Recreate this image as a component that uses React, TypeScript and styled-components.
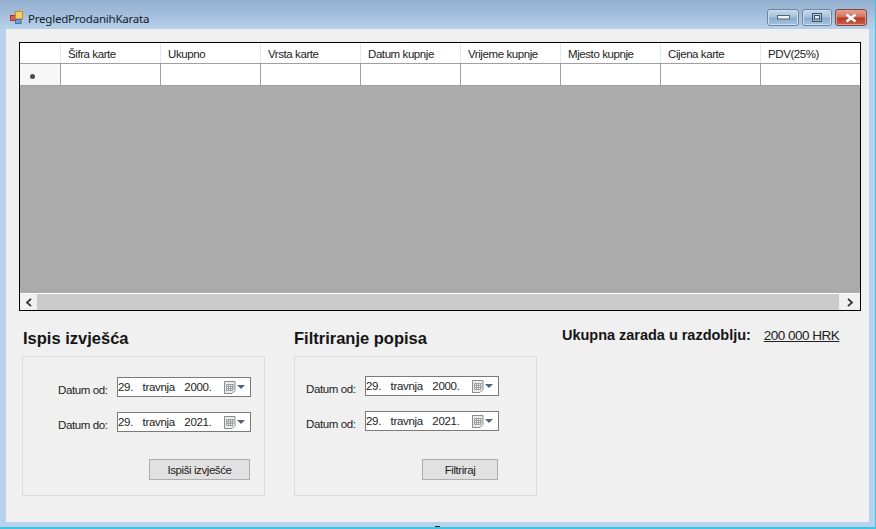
import React from "react";
import styled, { createGlobalStyle } from "styled-components";

const Global = createGlobalStyle`
  html, body { margin: 0; padding: 0; width: 876px; height: 529px; overflow: hidden; background: #b9d1ea; }
  * { box-sizing: border-box; }
`;

const Frame = styled.div`
  position: relative;
  width: 876px;
  height: 529px;
  display: flex;
  flex-direction: column;
  overflow: hidden;
  padding: 0 6px 0 6px;
  border-bottom: 2px solid #38c6e6;
  border-right: 1px solid #38c6e6;
  background: linear-gradient(180deg, #93afce 0, #a3bedb 14px, #b9d2ec 30px, #b9d2ec 100%);
  font-family: "Liberation Sans", Arial, sans-serif;
  color: #111;
  &::after {
    content: "";
    position: absolute;
    left: 435px;
    bottom: -1px;
    width: 5px;
    height: 2px;
    background: #222;
  }
`;

const TitleBar = styled.div`
  height: 29px;
  flex: none;
  display: flex;
  align-items: center;
  padding: 0 2px 0 4px;
`;

const AppIcon = styled.svg`
  width: 13px;
  height: 13px;
  flex: none;
  margin-top: 5px;
`;

const Title = styled.div`
  margin: 7px 0 0 5px;
  font: 11.5px "Noto Sans", sans-serif;
  letter-spacing: -0.22px;
  color: #15202c;
  flex: 1;
`;

const WinButtons = styled.div`
  display: flex;
  gap: 3px;
  align-self: flex-start;
  margin-top: 9px;
`;

const WinButton = styled.div<{ $w: number; $close?: boolean }>`
  width: ${(p) => p.$w}px;
  height: 17px;
  border: 1px solid ${(p) => (p.$close ? "#7d4a45" : "#6d84a0")};
  border-radius: 3px;
  box-shadow: inset 0 0 0 1px ${(p) => (p.$close ? "#e09a8e" : "#cfdeee")};
  background: ${(p) =>
    p.$close
      ? "linear-gradient(180deg,#e6a596 0,#d5705e 45%,#b83a26 55%,#c8604a 100%)"
      : "linear-gradient(180deg,#c6d8ea 0,#a8c2dc 45%,#8cabcb 55%,#a7c5e2 100%)"};
  display: flex;
  align-items: center;
  justify-content: center;
`;

const Client = styled.div`
  flex: 1;
  width: 863px;
  margin-bottom: 5px;
  background: #f0f0f0;
  padding: 13px 8px 0 13px;
  display: flex;
  flex-direction: column;
`;

const GridBox = styled.div`
  width: 842px;
  height: 269px;
  flex: none;
  border: 1px solid #000;
  background: #ababab;
  display: flex;
  flex-direction: column;
  overflow: hidden;
`;

const Row = styled.div<{ $h: number }>`
  display: flex;
  flex: none;
  height: ${(p) => p.$h}px;
  width: 840px;
  overflow: hidden;
  background: #fff;
  border-bottom: 1px solid #a0a0a0;
`;

const HeaderCell = styled.div<{ $corner?: boolean }>`
  flex: none;
  width: ${(p) => (p.$corner ? 41 : 100)}px;
  border-right: 1px solid #dfe8f4;
  padding: 2px 0 0 7px;
  font-size: 11.5px;
  line-height: 18px;
  letter-spacing: -0.42px;
  color: #222;
`;

const Cell = styled.div`
  flex: none;
  width: 100px;
  border-right: 1px solid #a0a0a0;
  background: #fff;
`;

const RowHead = styled.div`
  flex: none;
  width: 41px;
  background: #f7f7f7;
  border-right: 1px solid #a0a0a0;
  display: flex;
  align-items: center;
  justify-content: flex-start;
  padding-left: 10px;
`;

const Star = styled.span`
  width: 5px;
  height: 5px;
  border-radius: 50%;
  background: #4a4a4a;
  margin-top: 3px;
`;

const Gray = styled.div`
  flex: 1;
`;

const ScrollBar = styled.div`
  flex: none;
  height: 17px;
  border-top: 1px solid #fff;
  background: #f0f0f0;
  display: flex;
  align-items: stretch;
`;

const ScrollBtn = styled.div<{ $w: number }>`
  width: ${(p) => p.$w}px;
  flex: none;
  display: flex;
  align-items: center;
  justify-content: center;
`;

const Thumb = styled.div`
  flex: 1;
  background: #cbcbcb;
`;

const Bottom = styled.div`
  display: flex;
  align-items: flex-start;
  padding: 17px 0 0 3px;
`;

const Section = styled.section`
  width: 243px;
  flex: none;
  margin-right: 29px;
`;

const Heading = styled.h2<{ $pl: number }>`
  margin: 0 0 8px;
  padding-left: ${(p) => p.$pl}px;
  font-size: 16.5px;
  line-height: 20px;
  font-weight: 700;
  color: #151515;
`;

const Panel = styled.div<{ $pl: number; $pt: number; $btnGap: number; $btnRight: number; $btnW: number }>`
  height: 140px;
  border: 1px solid #dcdcdc;
  padding: ${(p) => p.$pt}px 0 0 ${(p) => p.$pl}px;
  display: flex;
  flex-direction: column;
  gap: 15px;
  button {
    width: ${(p) => p.$btnW}px;
    margin-top: ${(p) => p.$btnGap}px;
    align-self: flex-end;
    margin-right: ${(p) => p.$btnRight}px;
  }
`;

const Field = styled.div`
  display: flex;
  align-items: center;
`;

const Label = styled.label`
  width: 59px;
  flex: none;
  font-size: 11.5px;
  letter-spacing: -0.38px;
  color: #222;
  padding-top: 6px;
`;

const DatePicker = styled.div`
  width: 134px;
  height: 20px;
  flex: none;
  border: 1px solid #7a7a7a;
  background: #fff;
  display: flex;
  align-items: center;
  font-size: 11.5px;
  letter-spacing: -0.3px;
  word-spacing: 6.5px;
  color: #222;
`;

const DateText = styled.span`
  flex: 1;
  white-space: pre;
  padding-bottom: 1px;
`;

const CalIcon = styled.svg`
  width: 21px;
  height: 13px;
  flex: none;
  margin-right: 5px;
`;

const ActionButton = styled.button`
  height: 21px;
  border: 1px solid #adadad;
  background: #e1e1e1;
  font-family: "Liberation Sans", Arial, sans-serif;
  font-size: 11.5px;
  letter-spacing: -0.42px;
  color: #222;
  padding: 0;
`;

const Total = styled.div`
  display: flex;
  align-items: baseline;
  margin: -1px 0 0 -4px;
`;

const TotalLabel = styled.span`
  font-size: 14.5px;
  font-weight: 700;
  letter-spacing: -0.02px;
  color: #151515;
`;

const TotalValue = styled.span`
  margin-left: 13px;
  font-size: 13.5px;
  letter-spacing: -0.5px;
  text-decoration: underline;
  color: #222;
`;

const Calendar = () => (
  <CalIcon viewBox="0 0 21 13">
    <path d="M.5 .5h10.5v9l-3 3H.5z" fill="#ececec" stroke="#8a8a8a" />
    <path d="M2 3.5h8M2 5.5h8M2 7.5h8M2 9.5h7M2.5 3v7M4.5 3v7M6.5 3v7M8.5 3v7" stroke="#a0a4a9" strokeWidth="1" />
    <path d="M13 4h8l-4 4z" fill="#4f6478" />
  </CalIcon>
);

const Picker = ({ value }: { value: string }) => (
  <DatePicker>
    <DateText>{value}</DateText>
    <Calendar />
  </DatePicker>
);

const columns = ["Šifra karte", "Ukupno", "Vrsta karte", "Datum kupnje", "Vrijeme kupnje", "Mjesto kupnje", "Cijena karte", "PDV(25%)"];

export default function App() {
  return (
    <Frame>
      <Global />
      <TitleBar>
        <AppIcon viewBox="0 0 13 13">
          <rect x="0.5" y="4.5" width="5" height="5" fill="#e25b4a" stroke="#a33" />
          <rect x="5.5" y="0.5" width="7" height="7.5" fill="#f4cf5d" stroke="#b98f2a" />
          <rect x="5.5" y="8.5" width="5.5" height="4" fill="#6c9fdc" stroke="#46709f" />
        </AppIcon>
        <Title>PregledProdanihKarata</Title>
        <WinButtons>
          <WinButton $w={32}>
            <svg width="13" height="5" viewBox="0 0 13 5"><rect x=".5" y=".5" width="12" height="3.5" fill="#eef3f8" stroke="#4f6478" /></svg>
          </WinButton>
          <WinButton $w={30}>
            <svg width="10" height="9" viewBox="0 0 10 9"><rect x=".5" y=".5" width="9" height="8" fill="none" stroke="#3f5468" /><rect x="2.5" y="2.5" width="5" height="3.5" fill="#dfe9f3" stroke="#3f5468" /></svg>
          </WinButton>
          <WinButton $w={32} $close>
            <svg width="14" height="10" viewBox="0 0 14 10"><path d="M2.5 1.5l9 7M11.5 1.5l-9 7" stroke="#fff" strokeWidth="2.6" /></svg>
          </WinButton>
        </WinButtons>
      </TitleBar>
      <Client>
        <GridBox>
          <Row $h={21}>
            <HeaderCell $corner />
            {columns.map((c) => (
              <HeaderCell key={c}>{c}</HeaderCell>
            ))}
          </Row>
          <Row $h={22}>
            <RowHead><Star /></RowHead>
            {columns.map((c) => (
              <Cell key={c} />
            ))}
          </Row>
          <Gray />
          <ScrollBar>
            <ScrollBtn $w={17}>
              <svg width="8" height="9" viewBox="0 0 8 9"><path d="M6 .8L2 4.5 6 8.2" fill="none" stroke="#333" strokeWidth="1.8" /></svg>
            </ScrollBtn>
            <Thumb />
            <ScrollBtn $w={21}>
              <svg width="8" height="9" viewBox="0 0 8 9"><path d="M2 .8L6 4.5 2 8.2" fill="none" stroke="#333" strokeWidth="1.8" /></svg>
            </ScrollBtn>
          </ScrollBar>
        </GridBox>
        <Bottom>
          <Section>
            <Heading $pl={1}>Ispis izvješća</Heading>
            <Panel $pl={35} $pt={20} $btnGap={12} $btnRight={14} $btnW={101}>
              <Field><Label>Datum od:</Label><Picker value="29. travnja 2000." /></Field>
              <Field><Label>Datum do:</Label><Picker value="29. travnja 2021." /></Field>
              <ActionButton>Ispiši izvješće</ActionButton>
            </Panel>
          </Section>
          <Section>
            <Heading $pl={0}>Filtriranje popisa</Heading>
            <Panel $pl={11} $pt={19} $btnGap={13} $btnRight={38} $btnW={76}>
              <Field><Label>Datum od:</Label><Picker value="29. travnja 2000." /></Field>
              <Field><Label>Datum od:</Label><Picker value="29. travnja 2021." /></Field>
              <ActionButton>Filtriraj</ActionButton>
            </Panel>
          </Section>
          <Total>
            <TotalLabel>Ukupna zarada u razdoblju:</TotalLabel>
            <TotalValue>200 000 HRK</TotalValue>
          </Total>
        </Bottom>
      </Client>
    </Frame>
  );
}
